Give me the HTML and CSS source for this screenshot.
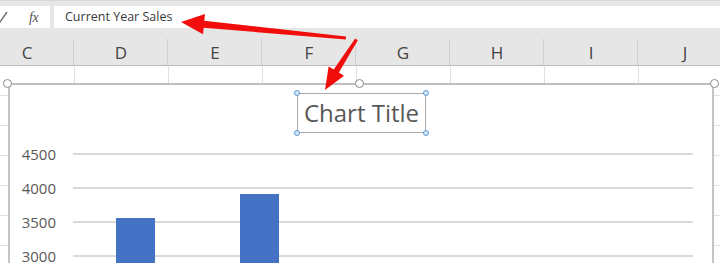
FILE: index.html
```html
<!DOCTYPE html>
<html lang="en">
<head>
<meta charset="utf-8">
<title>Chart Title</title>
<link rel="stylesheet" href="styles.css">
</head>
<body>
<div class="app">
  <div class="formula-bar">
    <div class="fx-box">
      <svg class="check" width="10" height="22" viewBox="0 0 10 22"><polyline points="-5,11 0,16 7,6" fill="none" stroke="#707070" stroke-width="1.4"/></svg>
      <span class="fx">fx</span>
    </div>
    <div class="formula-input">Current Year Sales</div>
  </div>
  <div class="col-headers">
    <div class="col">C</div>
    <div class="col">D</div>
    <div class="col">E</div>
    <div class="col">F</div>
    <div class="col">G</div>
    <div class="col">H</div>
    <div class="col">I</div>
    <div class="col">J</div>
  </div>
  <div class="sheet">
    <div class="chart">
      <span class="handle handle-l"></span>
      <span class="handle handle-m"></span>
      <span class="handle handle-r"></span>
      <div class="title-row">
        <div class="title-box">
          Chart Title
          <span class="dot dot-tl"></span>
          <span class="dot dot-tr"></span>
          <span class="dot dot-bl"></span>
          <span class="dot dot-br"></span>
        </div>
      </div>
      <div class="plot-row">
        <div class="axis">
          <span>4500</span><span>4000</span><span>3500</span><span>3000</span>
        </div>
        <div class="plot">
          <div class="cat"><div class="bar" style="height:243px"></div></div>
          <div class="cat"><div class="bar" style="height:267px"></div></div>
          <div class="cat"><div class="bar" style="height:170px"></div></div>
          <div class="cat"><div class="bar" style="height:140px"></div></div>
          <div class="cat"><div class="bar" style="height:120px"></div></div>
        </div>
      </div>
    </div>
  </div>
  <svg class="arrows" width="720" height="263" viewBox="0 0 720 263">
    <polygon points="181,22 205,14 204.3,20.7 346,36.6 345.8,39.6 203.7,27.7 203,34.3" fill="#f20d0d"/>
    <polygon points="325,90 328.6,66.5 333.7,69.6 355.2,38.6 357.8,40.2 338.9,72.6 344,75.7" fill="#f20d0d"/>
  </svg>
</div>
</body>
</html>
```

FILE: styles.css
```css
html, body {
  margin: 0;
  padding: 0;
  background: #ffffff;
}
.app {
  position: relative;
  width: 720px;
  height: 263px;
  overflow: hidden;
  font-family: "Open Sans", "Noto Sans", sans-serif;
}
.formula-bar {
  display: flex;
  gap: 4px;
  height: 22px;
  padding-top: 6px;
  background: #e6e6e6;
  box-shadow: inset 0 5px 0 -4px #d9d9d9;
}
.fx-box {
  width: 50px;
  background: #ffffff;
  display: flex;
  align-items: center;
  gap: 19px;
}
.check {
  display: block;
}
.fx {
  font-family: "Liberation Serif", serif;
  font-style: italic;
  font-size: 14px;
  color: #555555;
  letter-spacing: -0.5px;
  padding-top: 1px;
}
.formula-input {
  flex: 1;
  background: #ffffff;
  font-size: 12.5px;
  line-height: 22px;
  color: #3a3a3a;
  padding-left: 11px;
}
.col-headers {
  display: flex;
  margin-left: -20px;
  height: 37px;
  background: #e6e6e6;
  border-bottom: 1px solid #bdbdbd;
}
.col {
  flex: 0 0 94px;
  box-sizing: border-box;
  text-align: center;
  font-size: 17px;
  line-height: 20px;
  padding-top: 15px;
  color: #444444;
  background-image: linear-gradient(#cfcfcf, #cfcfcf);
  background-size: 1px 26px;
  background-position: right bottom;
  background-repeat: no-repeat;
}
.sheet {
  position: relative;
  height: 197px;
  background-image:
    linear-gradient(to right, #e0e0e0 1px, transparent 1px),
    linear-gradient(to bottom, #e0e0e0 1px, transparent 1px);
  background-size: 94px 100%, 100% 30px;
  background-position: 74px 0, 0 29px;
}
.chart {
  position: absolute;
  left: 8px;
  top: 17px;
  width: 706px;
  height: 420px;
  box-sizing: border-box;
  background: #ffffff;
  border-top: 2px solid #bfbfbf;
  border-left: 2px solid #c4c4c4;
  border-right: 2px solid #c4c4c4;
}
.handle {
  position: absolute;
  top: -6px;
  width: 7px;
  height: 7px;
  border: 1.5px solid #8a8a8a;
  border-radius: 50%;
  background: #ffffff;
}
.handle-l { left: -7px; }
.handle-m { left: 345px; }
.handle-r { right: -7px; }
.title-row {
  display: flex;
  justify-content: center;
  padding-top: 8px;
}
.title-box {
  position: relative;
  width: 129px;
  height: 40px;
  box-sizing: border-box;
  border: 1px solid #a9a9a9;
  font-size: 24px;
  line-height: 37px;
  text-align: center;
  color: #595959;
  margin-left: 1px;
}
.dot {
  position: absolute;
  width: 4px;
  height: 4px;
  border: 1px solid #5b9bd5;
  border-radius: 50%;
  background: #d6e6f7;
}
.dot-tl { left: -4px; top: -4px; }
.dot-tr { right: -4px; top: -4px; }
.dot-bl { left: -4px; bottom: -4px; }
.dot-br { right: -4px; bottom: -4px; }
.plot-row {
  display: grid;
  grid-template-columns: 46px 620px;
  column-gap: 17px;
  margin-top: 4px;
}
.axis {
  display: flex;
  flex-direction: column;
  text-align: right;
  font-size: 15px;
  color: #595959;
}
.axis span {
  height: 34px;
  line-height: 34px;
}
.plot {
  margin-top: 16px;
  height: 308px;
  display: flex;
  align-items: flex-end;
  background-image: linear-gradient(to bottom, #d9d9d9 2px, transparent 2px);
  background-size: 100% 34px;
}
.cat {
  flex: 1;
  display: flex;
  justify-content: center;
}
.bar {
  width: 39px;
  background: #4472c4;
}
.arrows {
  position: absolute;
  left: 0;
  top: 0;
  pointer-events: none;
}
```
